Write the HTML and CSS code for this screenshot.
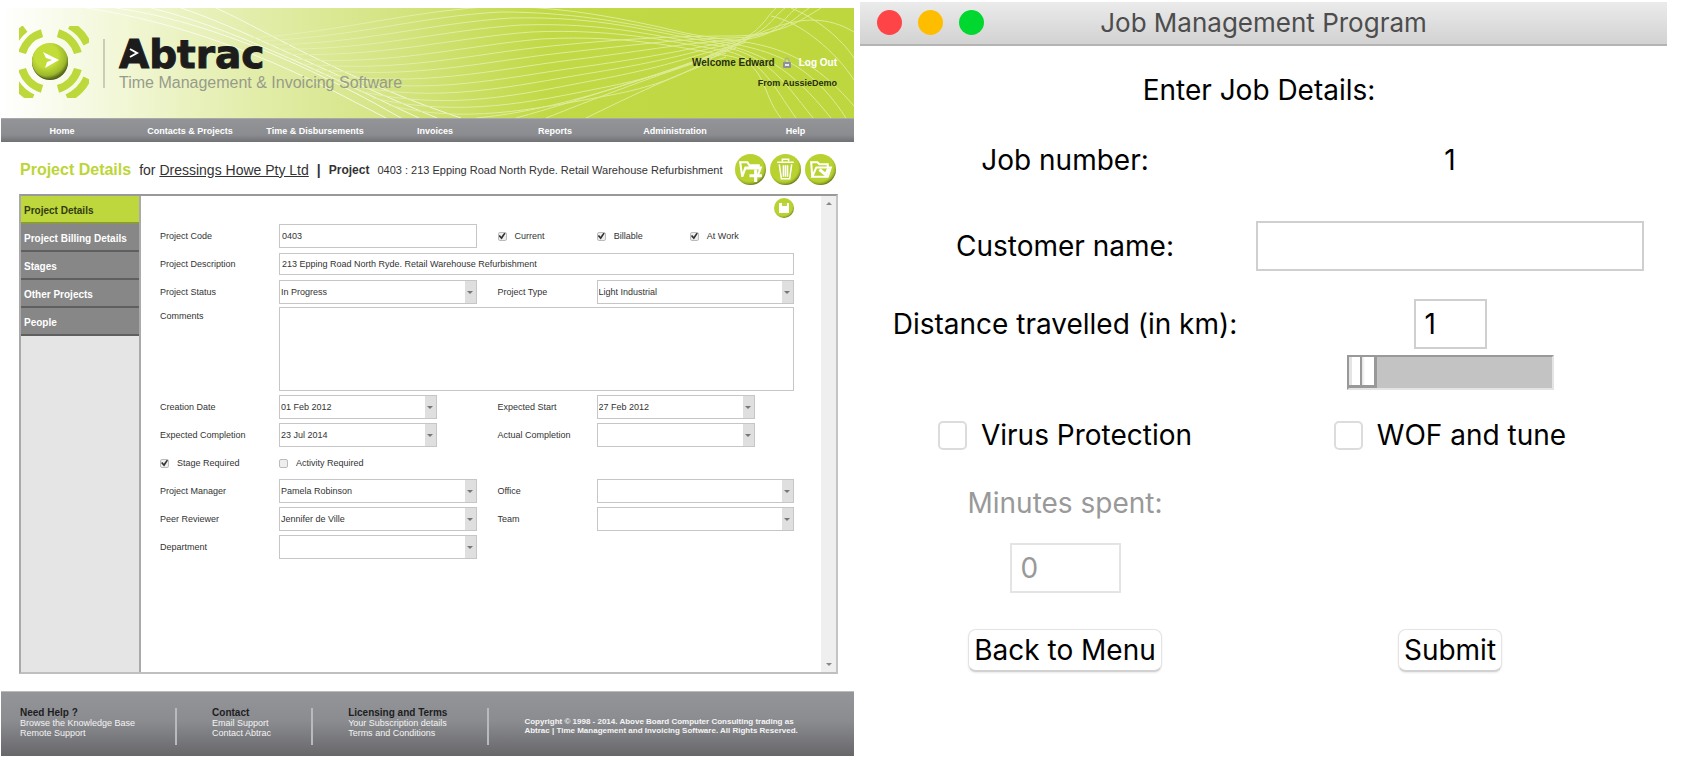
FILE: index.html
```html
<!DOCTYPE html>
<html lang="en">
<head>
<meta charset="utf-8">
<title>Abtrac and Job Management Program</title>
<link rel="stylesheet" href="styles.css">
</head>
<body>
<div class="desk">
  <section class="abtrac">
    <header class="banner">
      <svg class="waves" viewBox="0 0 853 110" preserveAspectRatio="none" aria-hidden="true">
        <g class="faint">
          <path d="M85 0C180 14 270 50 350 92L385 110"/>
          <path d="M115 0C200 12 290 50 375 96L400 110"/>
          <path d="M150 0C225 18 310 60 418 110"/>
          <path d="M180 0C235 18 320 62 436 110"/>
          <path d="M215 0C260 20 340 70 460 110"/>
        </g>
        <g>
          <path d="M250 30C340 24 410 2 500 -2C570 0 620 10 680 24S790 24 853 98"/>
          <path d="M256 33C350 30 420 8 500 4C580 4 640 18 695 29S800 40 845 110"/>
          <path d="M264 37C360 36 430 15 510 10C600 8 650 24 705 33S790 60 830 110"/>
          <path d="M272 41C370 43 440 22 520 17C610 14 660 30 712 37S780 70 812 110"/>
          <path d="M282 46C380 50 450 30 530 24C620 20 680 36 720 42S772 78 795 110"/>
          <path d="M292 51C390 58 460 38 540 31C630 26 690 42 728 48S760 86 780 110"/>
          <path d="M302 56C400 65 470 46 550 38S680 28 730 28S800 12 820 0"/>
          <path d="M312 61C410 72 480 54 560 45S680 31 730 30S790 12 808 0"/>
          <path d="M322 66C420 80 490 62 570 52S690 34 735 32S780 10 796 0"/>
          <path d="M334 71C430 88 500 70 580 59S690 40 728 34S770 10 784 0"/>
          <path d="M346 77C440 96 510 78 590 65S690 44 724 37S765 8 775 0"/>
          <path d="M358 83C450 104 520 86 595 72S690 48 720 41S800 -8 853 24"/>
          <path d="M372 90C460 110 530 94 605 79S700 50 740 34"/>
          <path d="M388 97C460 116 530 102 610 87S710 46 750 30"/>
          <path d="M475 110C540 104 620 82 745 34"/>
          <path d="M515 110C580 92 650 68 735 40"/>
          <path d="M545 110C610 84 670 62 725 45"/>
          <path d="M585 110C630 88 680 64 725 49"/>
          <path d="M790 0C815 10 840 30 853 50"/>
          <path d="M770 8C800 14 835 44 853 72"/>
        </g>
      </svg>
      <div class="brand">
        <svg class="mark" viewBox="-31 -35 70 72" aria-hidden="true">
          <defs>
            <radialGradient id="ball" cx="40%" cy="35%" r="65%">
              <stop offset="0.5" stop-color="#c2dc38"/><stop offset="0.85" stop-color="#9cb82c"/><stop offset="1" stop-color="#5c7018"/>
            </radialGradient>
          </defs>
          <g fill="none" stroke="#bdd83b" stroke-width="8">
            <path d="M-27.9-8A29 29 0 0 1-8-27.9M8-27.9A29 29 0 0 1 27.9-8M27.9 8A29 29 0 0 1 8 27.9M-8 27.9A29 29 0 0 1-27.9 8"/>
            <path d="M-37.2-17.3A41 41 0 0 1-25-32.5M20-35.8A41 41 0 0 1 37.2-17.3M37.2 17.3A41 41 0 0 1 17.3 37.2M-17.3 37.2A41 41 0 0 1-37.2 17.3"/>
          </g>
          <circle cy="1" r="18" fill="#4d5a20"/>
          <circle r="18" fill="url(#ball)"/>
          <path d="M-7-9L9-1L-5 7L-3 1L2-1L-4-3Z" fill="#fff"/>
        </svg>
        <div class="brand-text">
          <div class="wordmark">Abtrac<svg class="chevron" viewBox="0 0 10 12" aria-hidden="true"><path d="M0 0H10V12H0Z" fill="#1c1c1c"/><path d="M1 2L8 6L1 10" fill="none" stroke="#fff" stroke-width="2"/></svg></div>
          <div class="tagline">Time Management &amp; Invoicing Software</div>
        </div>
      </div>
      <div class="account">
        <div class="account-row">Welcome Edward
          <svg class="lock" viewBox="0 0 8 11" aria-hidden="true"><path d="M2 5V3A2 2 0 0 1 6 3V5" fill="none" stroke="#a5a9a0"/><rect y="5" width="8" height="6" rx="1" fill="#8f9199"/><path d="M2 8H6" stroke="#e8e8f0" stroke-width="2"/></svg>
          <a href="#">Log Out</a>
        </div>
        <div class="company">From AussieDemo</div>
      </div>
    </header>
    <nav class="menu">
      <a href="#">Home</a><a href="#">Contacts &amp; Projects</a><a href="#">Time &amp; Disbursements</a><a href="#">Invoices</a><a href="#">Reports</a><a href="#">Administration</a><a href="#">Help</a>
    </nav>
    <div class="heading">
      <h1>Project Details</h1>
      <div class="client">for <a href="#">Dressings Howe Pty Ltd</a></div>
      <b class="bar">|</b>
      <div class="project"><b>Project</b>0403 : 213 Epping Road North Ryde. Retail Warehouse Refurbishment</div>
      <div class="tools">
        <button class="round" aria-label="New project"><svg viewBox="0 0 30 30" aria-hidden="true"><path d="M7 22L5 8H12L14 11H23V14H10ZM7 22L10 13H25L22 21" fill="none" stroke="#fff" stroke-width="2"/><path d="M20 15V27M14 21H26" stroke="#fff" stroke-width="3"/></svg></button>
        <button class="round" aria-label="Delete project"><svg viewBox="0 0 30 30" aria-hidden="true"><path d="M7 8H23M12 7V5H18V7M9 10L11 24H19L21 10M13 11V22M15 11V22M17 11V22" fill="none" stroke="#fff" stroke-width="1.5"/></svg></button>
        <button class="round" aria-label="Move project"><svg viewBox="0 0 30 30" aria-hidden="true"><path d="M7 22L6 8H12L14 10H22V13H11ZM7 22L11 13H25L22 22Z" fill="none" stroke="#fff" stroke-width="2"/><path d="M14 15L20 20L23 14" fill="none" stroke="#fff" stroke-width="3"/></svg></button>
      </div>
    </div>
    <div class="panel">
      <aside class="tabs">
        <a class="tab current" href="#">Project Details</a>
        <a class="tab" href="#">Project Billing Details</a>
        <a class="tab" href="#">Stages</a>
        <a class="tab" href="#">Other Projects</a>
        <a class="tab" href="#">People</a>
      </aside>
      <form class="details">
        <div class="save-row">
          <button type="button" class="round small" aria-label="Save"><svg viewBox="0 0 20 20" aria-hidden="true"><path d="M5 5H15V15H5Z" fill="#fff"/><path d="M8 5H13V8H8Z" fill="#bdd34a"/></svg></button>
        </div>
        <div class="fields">
          <label for="code">Project Code</label>
          <input class="box" id="code" value="0403">
          <div class="ticks">
            <label><input type="checkbox" checked>Current</label>
            <label><input type="checkbox" checked>Billable</label>
            <label><input type="checkbox" checked>At Work</label>
          </div>
          <label for="desc">Project Description</label>
          <input class="box span" id="desc" value="213 Epping Road North Ryde. Retail Warehouse Refurbishment">
          <label for="status">Project Status</label>
          <div class="pick"><select id="status"><option>In Progress</option></select></div>
          <label class="second" for="type">Project Type</label>
          <div class="pick"><select id="type"><option>Light Industrial</option></select></div>
          <label class="top" for="comments">Comments</label>
          <textarea class="span" id="comments"></textarea>
          <label for="created">Creation Date</label>
          <div class="pick date"><select id="created"><option>01 Feb 2012</option></select></div>
          <label class="second" for="start">Expected Start</label>
          <div class="pick date"><select id="start"><option>27 Feb 2012</option></select></div>
          <label for="expected">Expected Completion</label>
          <div class="pick date"><select id="expected"><option>23 Jul 2014</option></select></div>
          <label class="second" for="actual">Actual Completion</label>
          <div class="pick date"><select id="actual"><option></option></select></div>
          <label class="tick"><input type="checkbox" checked>Stage Required</label>
          <label class="tick rest"><input type="checkbox">Activity Required</label>
          <label for="manager">Project Manager</label>
          <div class="pick"><select id="manager"><option>Pamela Robinson</option></select></div>
          <label class="second" for="office">Office</label>
          <div class="pick"><select id="office"><option></option></select></div>
          <label for="reviewer">Peer Reviewer</label>
          <div class="pick"><select id="reviewer"><option>Jennifer de Ville</option></select></div>
          <label class="second" for="team">Team</label>
          <div class="pick"><select id="team"><option></option></select></div>
          <label for="dept">Department</label>
          <div class="pick"><select id="dept"><option></option></select></div>
        </div>
      </form>
      <div class="scroll" aria-hidden="true"><i class="up"></i><i class="down"></i></div>
    </div>
    <footer class="foot">
      <div class="foot-col"><b>Need Help ?</b><a href="#">Browse the Knowledge Base</a><a href="#">Remote Support</a></div>
      <div class="foot-col"><b>Contact</b><a href="#">Email Support</a><a href="#">Contact Abtrac</a></div>
      <div class="foot-col"><b>Licensing and Terms</b><a href="#">Your Subscription details</a><a href="#">Terms and Conditions</a></div>
      <p class="legal">Copyright © 1998 - 2014. Above Board Computer Consulting trading as<br>Abtrac | Time Management and Invoicing Software. All Rights Reserved.</p>
    </footer>
  </section>

  <section class="window">
    <header class="titlebar">
      <div class="lights"><i class="red"></i><i class="amber"></i><i class="green"></i></div>
      <h2>Job Management Program</h2>
    </header>
    <form class="job">
      <p class="intro">Enter Job Details:</p>
      <div class="row number"><span>Job number:</span><output>1</output></div>
      <div class="row customer"><label for="customer">Customer name:</label><input class="entry" id="customer"></div>
      <div class="row distance">
        <label for="km">Distance travelled (in km):</label>
        <div class="measure"><input class="entry km" id="km" value="1"><input class="slider" type="range" min="1" max="100" value="1" aria-label="Distance slider"></div>
      </div>
      <div class="row options">
        <label class="option"><input type="checkbox">Virus Protection</label>
        <label class="option"><input type="checkbox">WOF and tune</label>
      </div>
      <div class="row minutes"><label for="minutes">Minutes spent:</label></div>
      <div class="row spent"><input class="entry spent-box" id="minutes" value="0" disabled></div>
      <div class="row actions"><button type="button" class="push">Back to Menu</button><button type="button" class="push">Submit</button></div>
    </form>
  </section>
</div>
</body>
</html>
```
FILE: styles.css
```css
* { box-sizing: border-box; }
body { margin: 0; background: #fff; font-family: "Liberation Sans", Arial, sans-serif; }
a { color: inherit; text-decoration: none; }
button, input, select, textarea { font: inherit; color: inherit; margin: 0; }
h1, h2, p { margin: 0; }

.desk {
  display: grid;
  grid-template-columns: minmax(0, 853fr) minmax(0, 807fr);
  gap: 6px;
  min-height: 100vh;
  padding: 0 17px 0 1px;
}

/* Abtrac */
.abtrac { display: flex; flex-direction: column; padding: 8px 0 18px; font-size: 9px; color: #333; }

.banner {
  position: relative;
  display: flex;
  justify-content: space-between;
  height: 110px;
  padding: 18px 17px 0 18px;
  background: linear-gradient(to right, #fff 0, #f4f8dc 12%, #e4eeae 28%, #d4e482 46%, #c1d946 64%, #bfd73e 100%);
}
.waves { position: absolute; inset: 0; width: 100%; height: 100%; fill: none; stroke: #e9f2b8; stroke-width: 1; opacity: .75; }
.waves .faint { stroke: #fff; }
.brand { position: relative; display: flex; }
.mark { width: 70px; height: 72px; }
.brand-text { margin: 10px 0 0 14px; padding-left: 16px; position: relative; }
.brand-text::before { content: ""; position: absolute; left: 0; top: 3px; width: 2px; height: 49px; background: #c9cfb4; }
.wordmark {
  position: relative;
  font: bold 39px/37px "DejaVu Sans", Verdana, sans-serif;
  color: #1c1c1c;
  -webkit-text-stroke: 1px #1c1c1c;
}
.chevron { position: absolute; left: 10px; top: 11px; width: 10px; height: 12px; -webkit-text-stroke: 0; }
.tagline { font-size: 16px; line-height: 20px; color: #979c8a; white-space: nowrap; }
.account { position: relative; padding-top: 28px; font-size: 10px; font-weight: bold; text-align: right; color: #26300a; }
.account-row { display: flex; align-items: center; gap: 8px; height: 16px; }
.account a { color: #fff; }
.lock { width: 8px; height: 11px; }
.company { margin-top: 6px; font-size: 9px; line-height: 14px; }

.menu {
  display: grid;
  grid-template-columns: 122fr 134fr 116fr 124fr 116fr 124fr 117fr;
  align-items: center;
  height: 24px;
  border-top: 1px solid #a8a8a8;
  background: linear-gradient(#939498, #8b8c90 70%, #707174);
  color: #fff;
  font-weight: bold;
  text-align: center;
}

.heading { display: flex; align-items: center; height: 52px; padding: 3px 18px 0 19px; color: #333; white-space: nowrap; }
.heading h1 { font-size: 16px; color: #bcd537; }
.client { margin-left: 8px; font-size: 14px; }
.client a { text-decoration: underline; }
.bar { margin: 0 8px; font-size: 14px; }
.project { font-size: 11px; }
.project b { margin-right: 8px; font-size: 12px; }
.tools { display: flex; gap: 4px; margin-left: auto; }
.round {
  flex: none;
  width: 31px;
  height: 31px;
  padding: 0;
  border: 0;
  border-radius: 50%;
  background: radial-gradient(circle at 45% 42%, #b9d22f 58%, #9db428 66%, #6f821c 72%);
}
.round svg { display: block; width: 100%; height: 100%; }
.small { width: 20px; height: 20px; }

.panel { flex: 1; display: flex; margin: 0 16px 17px 18px; border: 2px solid #a9a9a9; border-top-color: #999; border-right-color: #c4c4c4; border-bottom-color: #bfbfbf; }
.tabs { width: 120px; background: #e5e5e5; border-right: 2px solid #aaa; font-size: 10px; font-weight: bold; }
.tab { display: flex; align-items: center; height: 28px; padding: 2px 3px 0; background: #878787; border-bottom: 2px solid #5f5f5f; color: #fff; white-space: nowrap; }
.tab.current { background: #bdd73c; border-bottom-color: #8c9a3c; color: #333b10; }
.details { flex: 1; min-width: 0; padding: 2px 27px 0 19px; }
.save-row { display: flex; justify-content: flex-end; height: 24px; }
.fields { display: grid; grid-template-columns: 119px minmax(0, 1fr) 120px minmax(0, 1fr); grid-auto-rows: minmax(28px, auto); align-items: center; }
.fields > label { white-space: nowrap; }
.fields .second { padding-left: 21px; }
.box, .pick, textarea { width: 100%; height: 24px; border: 1px solid #c6c6c6; background: #fff; }
.box { padding: 0 2px; }
.span { grid-column: span 3; }
.fields > .span.box { height: 22px; }
.pick { position: relative; }
.pick select { width: 100%; height: 100%; padding: 0 14px 0 1px; border: 0; background: linear-gradient(to left, #dfdfdf 11px, #fff 11px); appearance: none; }
.pick::after { content: ""; position: absolute; right: 3px; top: 10px; border: 3px solid transparent; border-top-color: #777; border-bottom: 0; }
.date { width: 158px; max-width: 100%; }
.fields .top { align-self: start; padding-top: 5px; }
.fields textarea { display: block; height: 84px; margin: 1px 0 2px; resize: none; }
input[type="checkbox"] { appearance: none; flex: none; width: 9px; height: 9px; border: 1px solid #bbb; border-radius: 2px; background: #eee; }
.fields input:checked::before {
  content: "";
  display: block;
  width: 7px;
  height: 7px;
  background: #333;
  clip-path: polygon(0 50%, 20% 35%, 40% 60%, 85% 0, 100% 15%, 45% 100%);
}
.ticks { display: grid; grid-column: span 2; grid-template-columns: 99fr 93fr 104fr; padding-left: 21px; }
.ticks label, .tick { display: flex; align-items: center; gap: 8px; }
.rest { grid-column: span 3; }
.scroll { display: flex; flex-direction: column; justify-content: space-between; align-items: center; width: 15px; padding: 6px 0; background: #efefef; }
.scroll i { border: 3px solid transparent; }
.scroll .up { border-bottom-color: #888; border-top: 0; }
.scroll .down { border-top-color: #888; border-bottom: 0; }

.foot {
  display: flex;
  height: 65px;
  padding: 16px 18px 0 19px;
  border-top: 1px solid #bbb;
  background: linear-gradient(#949599, #8b8c90 45%, #67676a);
  color: #f4f4f4;
  line-height: 10px;
  white-space: nowrap;
}
.foot-col { display: flex; flex-direction: column; height: 37px; margin-right: 35px; padding-right: 40px; border-right: 2px solid #b9babd; }
.foot-col b { font-size: 10px; color: #1d1d1f; }
.legal { padding-top: 9px; font-size: 8px; font-weight: bold; line-height: 9px; }

/* Job window */
.window { padding-top: 2px; font: 28px/34px Inter, "Open Sans", sans-serif; color: #000; }
.titlebar {
  position: relative;
  display: flex;
  justify-content: center;
  align-items: center;
  height: 44px;
  border-bottom: 2px solid #b4b4b4;
  background: linear-gradient(#ebebeb, #d2d2d2);
  color: #4d4d4d;
}
.titlebar h2 { font-size: 26px; font-weight: normal; }
.lights { position: absolute; left: 17px; top: 8px; display: flex; gap: 16px; }
.lights i { width: 25px; height: 25px; border-radius: 50%; }
.red { background: #ff4447; }
.amber { background: #ffbd00; }
.green { background: #00d82f; }
.job { padding: 27px 23px 0 14px; }
.intro { text-align: center; }
.row { display: grid; grid-template-columns: minmax(0, 382fr) minmax(0, 388fr); justify-items: center; align-items: center; white-space: nowrap; }
.number { margin-top: 36px; }
.customer { margin-top: 44px; }
.entry { width: 100%; height: 50px; padding: 0 9px; border: 2px solid #cfcfcf; background: #fff; }
.distance { margin-top: 28px; align-items: start; }
.distance > label { line-height: 50px; }
.measure { display: flex; flex-direction: column; align-items: center; gap: 6px; }
.km { width: 73px; }
.slider {
  appearance: none;
  width: 207px;
  height: 35px;
  border: 2px solid #999;
  border-right-color: #e4e4e4;
  border-bottom-color: #e4e4e4;
  background: #c3c3c3;
}
.slider::-webkit-slider-thumb {
  appearance: none;
  width: 28px;
  height: 31px;
  border: solid #999;
  border-width: 0 3px 3px 0;
  background: linear-gradient(to right, #e4e4e4 3px, #fff 3px, #fff 11px, #999 11px, #999 13px, #e4e4e4 13px, #fff 16px);
}
.options { margin-top: 28px; }
.option { display: flex; align-items: center; gap: 14px; }
.option input { width: 29px; height: 29px; border: 2px solid #dcdcdc; border-radius: 5px; background: #fff; }
.minutes { margin-top: 34px; color: #999; }
.spent { margin-top: 23px; }
.spent-box { width: 111px; border-color: #e4e4e4; color: #999; }
.actions { margin-top: 36px; }
.push { height: 43px; padding: 0 5px; border: 1px solid #e4e4e4; border-bottom: 2px solid #d2d2d2; border-radius: 8px; background: #fff; box-shadow: 0 1px 2px #e8e8e8; }
```
